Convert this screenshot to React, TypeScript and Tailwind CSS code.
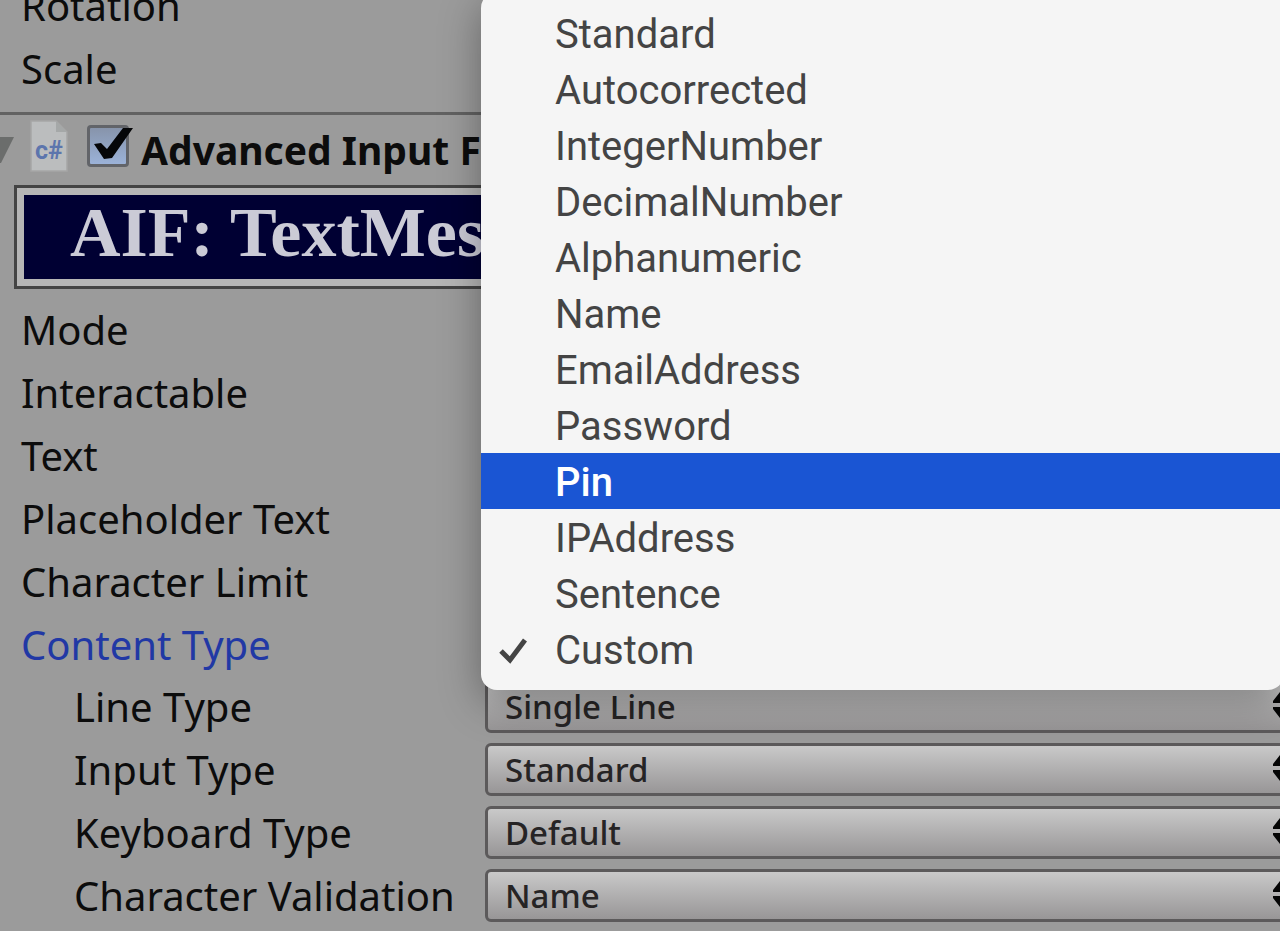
import { useState } from "react";
import { clsx } from "clsx";

const CONTENT_TYPES = [
  "Standard",
  "Autocorrected",
  "IntegerNumber",
  "DecimalNumber",
  "Alphanumeric",
  "Name",
  "EmailAddress",
  "Password",
  "Pin",
  "IPAddress",
  "Sentence",
  "Custom",
];

const FIELDS = ["Mode", "Interactable", "Text", "Placeholder Text", "Character Limit"];

const DROPDOWNS = [
  { id: "line-type", label: "Line Type", options: ["Single Line", "Multi Line Newline", "Multi Line Submit"] },
  { id: "input-type", label: "Input Type", options: ["Standard", "Auto Correct", "Password"] },
  { id: "keyboard-type", label: "Keyboard Type", options: ["Default", "Number Pad", "Email Address"] },
  { id: "character-validation", label: "Character Validation", options: ["Name", "Integer", "Decimal"] },
];

function FieldRow({ label, id, active }: { label: string; id?: string; active?: boolean }) {
  return (
    <div className={clsx("flex h-[63px] items-center pl-[21px]", active && "text-[#2138a5]")}>
      <span id={id}>{label}</span>
    </div>
  );
}

function DropdownRow({ id, label, options }: { id: string; label: string; options: string[] }) {
  return (
    <div className="flex h-[63px] items-center">
      <label htmlFor={id} className="w-[485px] shrink-0 pl-[74px] whitespace-nowrap">
        {label}
      </label>
      <div className="relative -mr-6 flex-1">
        <select
          id={id}
          className="block h-[53px] w-full appearance-none rounded-md border-[3px] border-[#5c5a5b] bg-linear-to-b from-[#c9c9c9] to-[#989697] pl-[17px] text-[33px] leading-[46px] font-medium text-[#262425] outline-none"
        >
          {options.map((o) => (
            <option key={o}>{o}</option>
          ))}
        </select>
        <svg viewBox="0 0 14 26" className="pointer-events-none absolute top-3 right-[17px] h-[26px] w-3.5" aria-hidden="true">
          <path d="M7 0 L14 9 V11 H0 V9 Z M0 15 H14 V17 L7 26 L0 17 Z" fill="#050505" />
        </svg>
      </div>
    </div>
  );
}

function ScriptIcon() {
  return (
    <svg viewBox="0 0 38 52" className="h-[52px] w-[38px]" aria-hidden="true">
      <path d="M1 1 H26 L37 12 V51 H1 Z" fill="#bbbdbe" stroke="#a6a6a6" strokeWidth="1.5" />
      <path d="M26 1 V12 H37 Z" fill="#a5a8a8" />
      <text x="19" y="39" textAnchor="middle" fontSize="25" fontWeight="700" fill="#5c75ad" fontFamily="Roboto, sans-serif">
        c#
      </text>
    </svg>
  );
}

function ComponentHeader() {
  const [enabled, setEnabled] = useState(true);

  return (
    <div className="flex h-[70px] items-center">
      <button type="button" aria-label="Collapse component" className="-ml-3.5 w-7 shrink-0">
        <svg viewBox="0 0 28 26" className="h-[26px] w-7">
          <path d="M0 0 H28 L15 26 H13 Z" fill="#6b6d6c" />
        </svg>
      </button>
      <div className="ml-4 -mt-2 shrink-0">
        <ScriptIcon />
      </div>
      <div className="relative -mt-2 ml-[19px] size-[42px] shrink-0">
        <input
          id="component-enabled"
          type="checkbox"
          checked={enabled}
          onChange={(e) => setEnabled(e.target.checked)}
          className="block size-full appearance-none rounded-sm border-[3px] border-[#626469] bg-linear-to-b from-[#8794ab] to-[#9bb2d8]"
        />
        {enabled && (
          <svg viewBox="0 0 46 42" className="pointer-events-none absolute top-0 left-0 h-[42px] w-[46px]" aria-hidden="true">
            <path d="M7 19 L14 18 L20 24 L36 3 H46 L25 33 L17 34 Z" fill="#050608" />
          </svg>
        )}
      </div>
      <label htmlFor="component-enabled" className="ml-3 pb-0.5 text-[39px] font-bold whitespace-nowrap">
        Advanced Input F
      </label>
    </div>
  );
}

function ContentTypeMenu() {
  const [selected, setSelected] = useState("Custom");
  const [hovered, setHovered] = useState("Pin");

  return (
    <div
      role="listbox"
      aria-labelledby="content-type"
      className="absolute -top-2 -right-1 left-[481px] rounded-2xl bg-[#f5f5f5] py-[13px] font-['Roboto',sans-serif] text-[40px] leading-none text-[#444] shadow-[0_12px_40px_rgba(0,0,0,0.35)]"
    >
      {CONTENT_TYPES.map((type) => (
        <button
          key={type}
          type="button"
          role="option"
          aria-selected={type === selected}
          onClick={() => setSelected(type)}
          onMouseEnter={() => setHovered(type)}
          className={clsx(
            "flex h-14 w-full items-center pt-1 text-left",
            type === hovered && "bg-[#1a55d3] font-medium text-white"
          )}
        >
          <span className="flex w-[74px] shrink-0 pl-[18px]">
            {type === selected && (
              <svg viewBox="0 0 28 26" className="h-[26px] w-7" fill="none" aria-hidden="true">
                <path d="M2 13 L11 22 L26 2" stroke="currentColor" strokeWidth="5" />
              </svg>
            )}
          </span>
          {type}
        </button>
      ))}
    </div>
  );
}

export default function App() {
  return (
    <div className="relative h-screen overflow-hidden bg-[#9b9b9b] font-['Noto_Sans',sans-serif] text-[40px] leading-none text-[#0c0c0c]">
      <div className="-mt-[26px]">
        <FieldRow label="Rotation" />
        <FieldRow label="Scale" />
      </div>

      <div className="mt-3 border-t-[3px] border-[#626262]">
        <ComponentHeader />
        <div className="-mr-4 ml-3.5 border-[3px] border-[#444] bg-[#b6b6b6] p-[7px]">
          <h1 className="flex h-[84px] items-center bg-[#000033] pb-2 pl-[46px] font-['Liberation_Serif',serif] text-[70px] font-bold whitespace-nowrap text-[#cbcbd6]">
            AIF: TextMes
          </h1>
        </div>

        <div className="mt-[9px]">
          {FIELDS.map((label) => (
            <FieldRow key={label} label={label} />
          ))}
          <FieldRow id="content-type" label="Content Type" active />
        </div>
        <div className="-mt-px">
          {DROPDOWNS.map((d) => (
            <DropdownRow key={d.id} {...d} />
          ))}
        </div>
      </div>

      <ContentTypeMenu />
    </div>
  );
}
